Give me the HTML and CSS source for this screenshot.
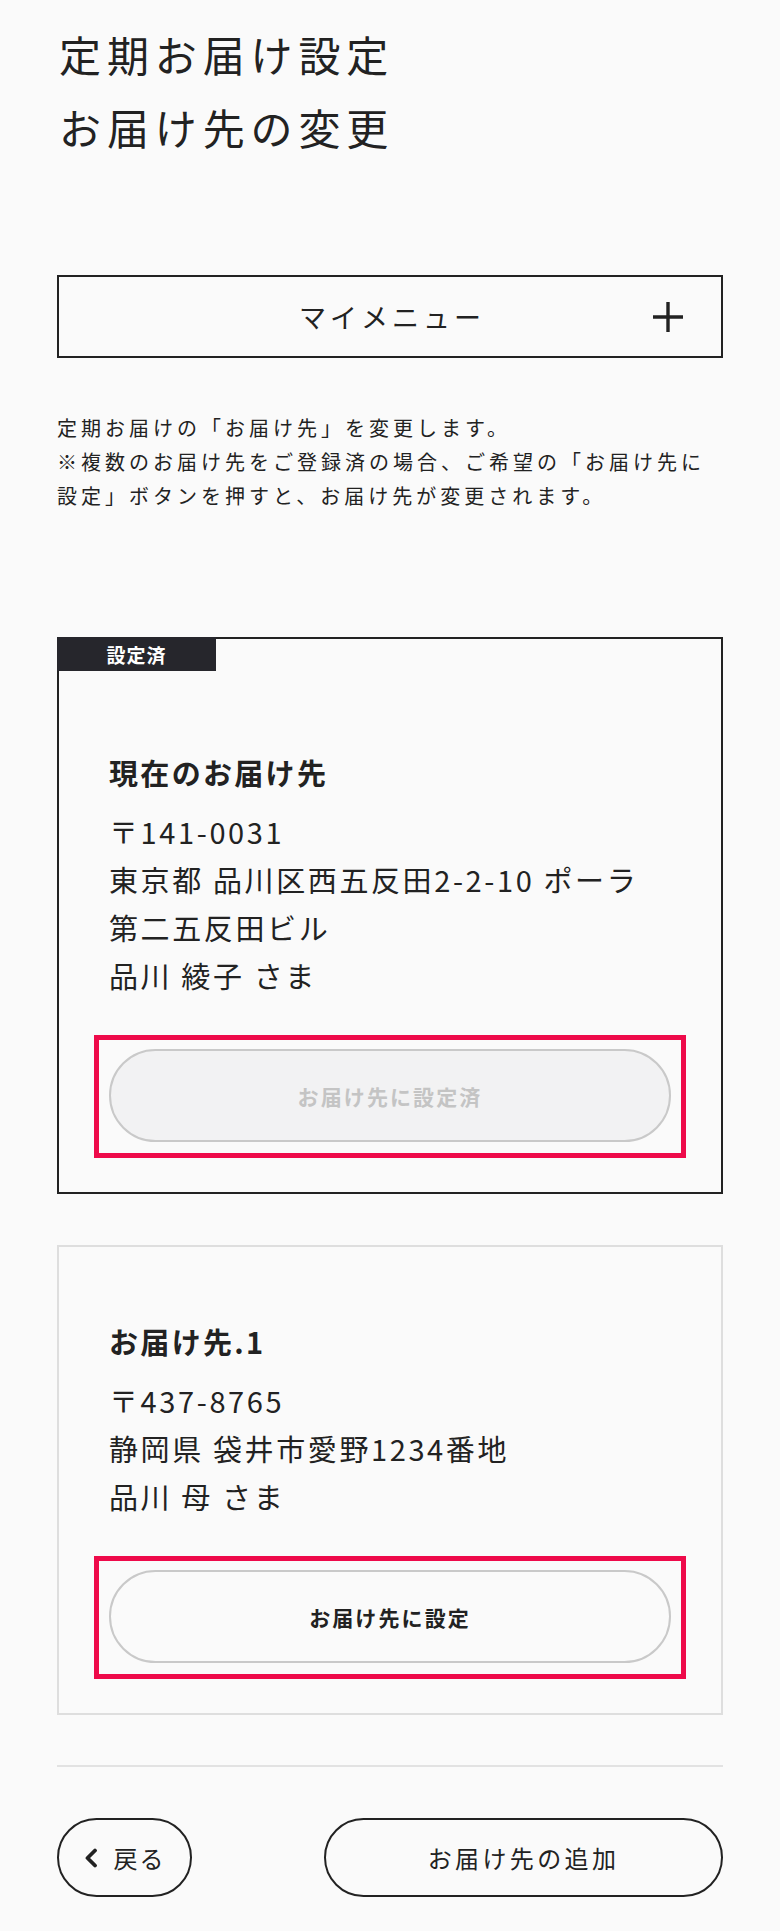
FILE: index.html
```html
<!DOCTYPE html>
<html lang="ja">
<head>
<meta charset="utf-8">
<title>お届け先の変更</title>
<link rel="stylesheet" href="styles.css">
</head>
<body>
<main class="page">
  <h1 class="page-title">定期お届け設定<br>お届け先の変更</h1>

  <div class="menu-toggle">
    <span class="menu-label">マイメニュー</span>
    <span class="menu-plus">
      <svg viewBox="0 0 30 30" width="30" height="30" aria-hidden="true"><path d="M15 0V30M0 15H30" stroke="#222" stroke-width="3.4" fill="none"/></svg>
    </span>
  </div>

  <p class="lead">定期お届けの「お届け先」を変更します。<br>※複数のお届け先をご登録済の場合、ご希望の「お届け先に<br>設定」ボタンを押すと、お届け先が変更されます。</p>

  <section class="addr-card addr-card--current">
    <span class="addr-badge">設定済</span>
    <h2 class="addr-name">現在のお届け先</h2>
    <p class="addr-lines">〒141-0031<br>東京都 品川区西五反田2-2-10 ポーラ<br>第二五反田ビル<br>品川 綾子 さま</p>
    <div class="focus-ring">
      <button class="pill-action" type="button" disabled>お届け先に設定済</button>
    </div>
  </section>

  <section class="addr-card addr-card--other">
    <h2 class="addr-name">お届け先.1</h2>
    <p class="addr-lines">〒437-8765<br>静岡県 袋井市愛野1234番地<br>品川 母 さま</p>
    <div class="focus-ring">
      <button class="pill-action" type="button">お届け先に設定</button>
    </div>
  </section>

  <hr class="divider">

  <div class="footer-actions">
    <button class="btn-outline btn-back" type="button">
      <svg class="chev" viewBox="0 0 14 20" width="14" height="20" aria-hidden="true"><polyline points="11,2.5 3.5,10 11,17.5" fill="none" stroke="#222" stroke-width="3.8" stroke-linecap="round" stroke-linejoin="round"/></svg>
      <span>戻る</span>
    </button>
    <button class="btn-outline btn-add" type="button">お届け先の追加</button>
  </div>
</main>
</body>
</html>
```

FILE: styles.css
```css
* {
  box-sizing: border-box;
  margin: 0;
  padding: 0;
}

html,
body {
  background: #fafafa;
}

body {
  font-family: "Noto Sans CJK JP", "Noto Sans", sans-serif;
  color: #222;
}

.page {
  width: 780px;
  padding: 17px 57px 34px;
}

.page-title {
  font-size: 42px;
  font-weight: 400;
  line-height: 73px;
  letter-spacing: 0.14em;
  padding-left: 2px;
  margin-bottom: 112px;
}

.menu-toggle {
  display: grid;
  grid-template-columns: 1fr auto 1fr;
  align-items: center;
  height: 83px;
  border: 2px solid #222;
}

.menu-label {
  grid-column: 2;
  font-size: 27px;
  line-height: 1;
  letter-spacing: 4px;
  padding-left: 4px;
}

.menu-plus {
  grid-column: 3;
  justify-self: end;
  display: flex;
  margin-right: 38px;
}

.lead {
  margin-top: 53px;
  font-size: 20px;
  line-height: 34px;
  letter-spacing: 4px;
  white-space: nowrap;
}

.addr-card {
  position: relative;
  border: 2px solid #222;
  padding: 70px 50px 0;
}

.addr-card--current {
  margin-top: 124px;
  padding-top: 109px;
}

.addr-card--other {
  margin-top: 51px;
  border-color: #dedede;
}

.addr-badge {
  position: absolute;
  top: -2px;
  left: -2px;
  width: 159px;
  height: 34px;
  display: flex;
  align-items: center;
  justify-content: center;
  background: #26262c;
  color: #fff;
  font-size: 19px;
  font-weight: 700;
  letter-spacing: 1px;
}

.addr-name {
  font-size: 29px;
  font-weight: 700;
  line-height: 48px;
  letter-spacing: 0.08em;
  margin-bottom: 11px;
}

.addr-lines {
  font-size: 29px;
  line-height: 48px;
  letter-spacing: 0.09em;
}

.focus-ring {
  margin: 36px -15px 34px;
  border: 5px solid #ee0a4a;
  padding: 9px 10px 11px;
}

.pill-action {
  display: block;
  width: 100%;
  height: 93px;
  border-radius: 47px;
  border: 2px solid #c9c9c9;
  background: transparent;
  font-family: inherit;
  font-size: 21px;
  font-weight: 700;
  letter-spacing: 0.1em;
  color: #222;
}

.pill-action:disabled {
  background: #f2f2f3;
  color: #c4c4c4;
}

.divider {
  margin-top: 50px;
  border: 0;
  border-top: 2px solid #e2e2e2;
}

.footer-actions {
  margin-top: 51px;
  display: flex;
  justify-content: space-between;
}

.btn-outline {
  height: 79px;
  border: 2px solid #222;
  border-radius: 40px;
  background: transparent;
  font-family: inherit;
  font-size: 24px;
  color: #222;
  display: flex;
  align-items: center;
  justify-content: center;
}

.btn-back {
  width: 135px;
  gap: 16px;
  letter-spacing: 0.08em;
}

.btn-add {
  width: 399px;
  letter-spacing: 0.14em;
}
```
